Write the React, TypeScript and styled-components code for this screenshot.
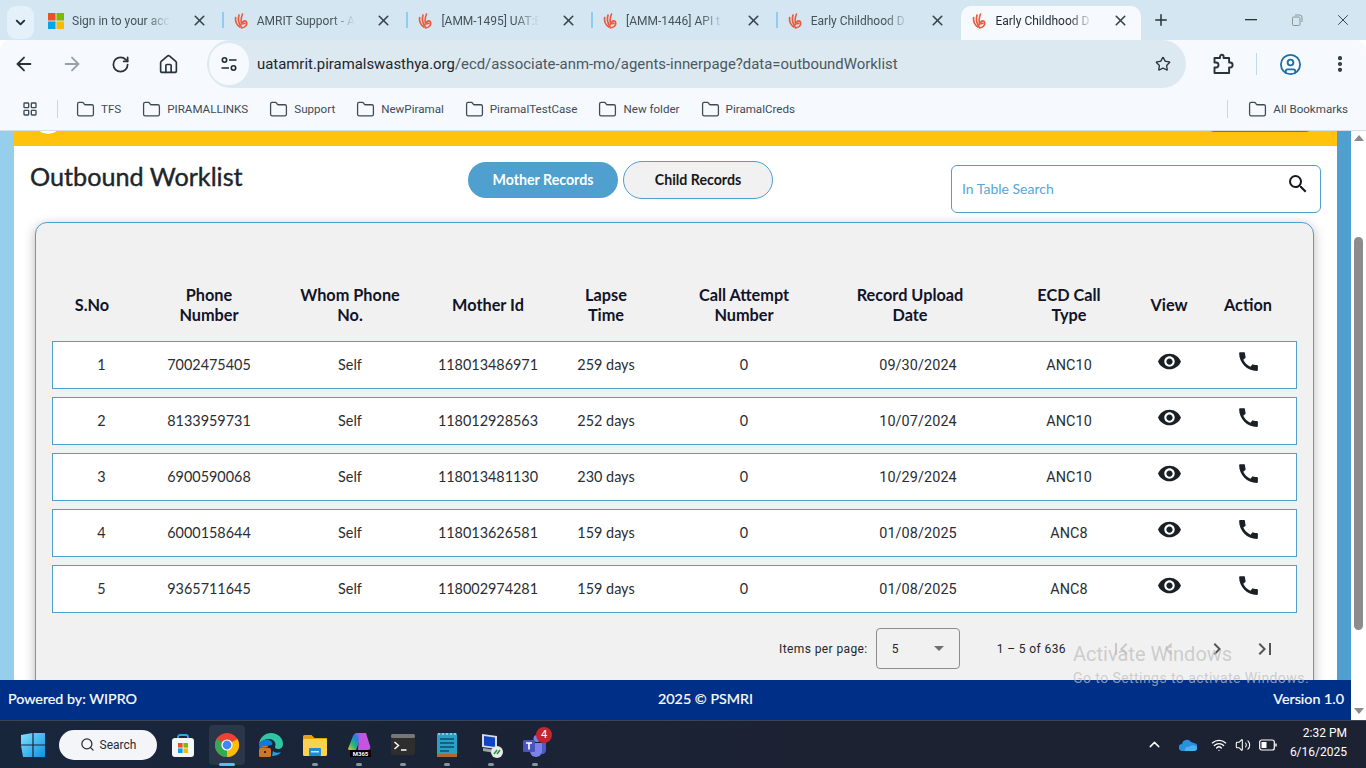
import React from 'react';
import styled, { createGlobalStyle, css } from 'styled-components';
import {
  ArrowLeft,
  ArrowRight,
  ChevronDown,
  ChevronUp,
  CircleUser,
  Folder,
  Home,
  LayoutGrid,
  MoreVertical,
  Plus,
  RotateCw,
  Search as SearchIcon,
  Star,
  Volume2,
  Wifi,
  X,
} from 'lucide-react';
import {
  MdCall,
  MdChevronLeft,
  MdChevronRight,
  MdFirstPage,
  MdLastPage,
  MdSearch,
  MdVisibility,
} from 'react-icons/md';

const GlobalStyle = createGlobalStyle`
  * { box-sizing: border-box; }
  html, body { margin: 0; padding: 0; overflow: hidden; }
  body { font-family: Lato, "Liberation Sans", sans-serif; }
`;

const tabs = [
  { title: 'Sign in to your acc', icon: 'ms' },
  { title: 'AMRIT Support - A', icon: 'amrit', sep: true },
  { title: '[AMM-1495] UAT:E', icon: 'amrit', sep: true },
  { title: '[AMM-1446] API t', icon: 'amrit', sep: true },
  { title: 'Early Childhood D', icon: 'amrit', sep: true },
  { title: 'Early Childhood D', icon: 'amrit', active: true },
];

const bookmarks = ['TFS', 'PIRAMALLINKS', 'Support', 'NewPiramal', 'PiramalTestCase', 'New folder', 'PiramalCreds'];

const records = [
  ['1', '7002475405', 'Self', '118013486971', '259 days', '0', '09/30/2024', 'ANC10'],
  ['2', '8133959731', 'Self', '118012928563', '252 days', '0', '10/07/2024', 'ANC10'],
  ['3', '6900590068', 'Self', '118013481130', '230 days', '0', '10/29/2024', 'ANC10'],
  ['4', '6000158644', 'Self', '118013626581', '159 days', '0', '01/08/2025', 'ANC8'],
  ['5', '9365711645', 'Self', '118002974281', '159 days', '0', '01/08/2025', 'ANC8'],
];

const Screen = styled.div`
  width: 1366px;
  height: 768px;
  display: flex;
  flex-direction: column;
  overflow: hidden;
  position: relative;
`;

/* browser chrome */
const TabStrip = styled.div`
  height: 40px;
  background: #d3e6f2;
  display: flex;
  align-items: flex-end;
  font-family: Roboto, sans-serif;
  font-size: 12px;
  color: #47525b;
`;

const TabMenu = styled.div`
  width: 27px;
  height: 33px;
  margin: 0 4px 1px 7px;
  border-radius: 9px;
  background: #e4f1fa;
  color: #1f2a33;
  display: flex;
  align-items: center;
  justify-content: center;
`;

const Tab = styled.div<{ $sep?: boolean; $active?: boolean }>`
  width: 184.7px;
  height: 34px;
  flex: none;
  padding: 0 15px 5px 10px;
  display: flex;
  align-items: center;
  position: relative;
  ${p => p.$sep && css`
    &::before {
      content: '';
      position: absolute;
      left: -1px;
      top: 6px;
      height: 16px;
      width: 2px;
      background: #8fcdf0;
    }
  `}
  ${p => p.$active && css`
    width: 180px;
    padding-right: 12px;
    background: #f6f9fe;
    border-radius: 10px 10px 0 0;
    color: #1f2a33;
  `}
`;

const TabTitle = styled.span`
  width: 98px;
  margin-left: 8px;
  white-space: nowrap;
  -webkit-mask-image: linear-gradient(to right, #000 76%, transparent 100%);
  mask-image: linear-gradient(to right, #000 76%, transparent 100%);
`;

const TabClose = styled.span`
  margin-left: auto;
  display: flex;
  color: #36424c;
`;

const NewTab = styled.div`
  width: 40px;
  height: 34px;
  display: flex;
  align-items: center;
  justify-content: center;
  padding-bottom: 6px;
  color: #27323b;
`;

const WindowButtons = styled.div`
  margin-left: auto;
  height: 40px;
  display: flex;
  align-items: center;
`;

const WindowButton = styled.div<{ $muted?: boolean }>`
  width: 46px;
  display: flex;
  justify-content: center;
  color: ${p => (p.$muted ? '#8a959c' : '#2b343b')};
`;

const Toolbar = styled.div`
  height: 48px;
  background: #f6f9fe;
  display: flex;
  align-items: center;
  border-radius: 10px 10px 0 0;
  color: #28333c;
`;

const ToolButton = styled.div<{ $muted?: boolean; $w?: number; $ml?: number }>`
  width: ${p => p.$w ?? 48}px;
  height: 48px;
  margin-left: ${p => p.$ml ?? 0}px;
  flex: none;
  display: flex;
  align-items: center;
  justify-content: center;
  color: ${p => (p.$muted ? '#98a1a8' : '#28333c')};
`;

const Omnibox = styled.div`
  width: 979px;
  height: 48px;
  margin-left: 15px;
  padding: 0 5px 0 2px;
  border-radius: 24px;
  background: #dde9f0;
  display: flex;
  align-items: center;
  font-family: Roboto, sans-serif;
  font-size: 14.9px;
  color: #4a5861;
`;

const SiteChip = styled.div`
  width: 40px;
  height: 42px;
  margin-right: 8px;
  border-radius: 21px;
  background: #f6f9fe;
  display: flex;
  align-items: center;
  justify-content: center;
  color: #1f2a33;
`;

const UrlHost = styled.span`
  color: #1c262e;
`;

const OmniStar = styled.span`
  margin-left: auto;
  width: 36px;
  display: flex;
  justify-content: center;
  color: #28333c;
`;

const ToolDivider = styled.div`
  width: 1px;
  height: 22px;
  margin-left: 8px;
  background: #bcdcf0;
  flex: none;
`;

const BookmarkBar = styled.div`
  height: 43px;
  background: #f6f9fe;
  border-bottom: 1px solid #d5dde3;
  display: flex;
  align-items: center;
  padding: 0 18px 0 22px;
  font-family: Roboto, sans-serif;
  font-size: 11.6px;
  color: #3e4b54;
`;

const BookmarkDivider = styled.div<{ $auto?: boolean }>`
  width: 1px;
  height: 18px;
  background: #bcdcf0;
  margin: ${p => (p.$auto ? '0 20px 0 auto' : '0 18px 0 19px')};
`;

const Bookmark = styled.div<{ $last?: boolean }>`
  display: flex;
  align-items: center;
  gap: 6px;
  margin-right: ${p => (p.$last ? 0 : 21)}px;
  white-space: nowrap;
`;

/* page */
const Viewport = styled.div`
  flex: 1;
  min-height: 0;
  display: flex;
`;

const PageColumn = styled.div`
  flex: 1;
  min-width: 0;
  display: flex;
  flex-direction: column;
`;

const PageBody = styled.div`
  flex: 1;
  min-height: 0;
  display: flex;
  overflow: hidden;
`;

const SideStrip = styled.div<{ $color: string }>`
  width: 14px;
  flex: none;
  background: ${p => p.$color};
`;

const Content = styled.div`
  flex: 1;
  min-width: 0;
  background: #fff;
`;

const YellowBar = styled.div`
  height: 15px;
  background: #ffc20e;
  position: relative;
  overflow: hidden;
`;

const LogoEdge = styled.div`
  position: absolute;
  left: 20px;
  top: -24px;
  width: 28px;
  height: 27px;
  border-radius: 50%;
  background: #fff;
`;

const ButtonEdge = styled.div`
  position: absolute;
  right: 22px;
  top: -30px;
  width: 110px;
  height: 31px;
  border-radius: 10px;
  background: #4d7a9c;
`;

const TopRow = styled.div`
  height: 76px;
  padding: 15px 16px 0;
  display: grid;
  grid-template-columns: 438px 483px 370px;
  align-items: start;
`;

const Title = styled.h1`
  margin: 0;
  font-size: 25.2px;
  font-weight: 400;
  line-height: 30px;
  color: #212529;
  -webkit-text-stroke: 0.4px #212529;
`;

const Toggle = styled.div`
  display: flex;
  align-items: center;
  gap: 5px;
  height: 38px;
`;

const ToggleButton = styled.button<{ $active?: boolean }>`
  width: 150px;
  height: ${p => (p.$active ? 36 : 38)}px;
  padding: 0 0 2px;
  border-radius: 20px;
  border: ${p => (p.$active ? 'none' : '1px solid #4f9fcf')};
  background: ${p => (p.$active ? '#4f9fcf' : '#f1f1f1')};
  color: ${p => (p.$active ? '#fff' : '#16181d')};
  font-family: inherit;
  font-size: 14.2px;
  font-weight: 700;
`;

const SearchBox = styled.div`
  height: 48px;
  margin-top: 4px;
  padding: 0 10px 8px;
  border: 1px solid #4f9fcf;
  border-radius: 6px;
  display: flex;
  align-items: center;
  color: #16181d;
  svg { margin-bottom: 2px; }
`;

const SearchInput = styled.input`
  flex: 1;
  border: 0;
  outline: 0;
  padding: 6px 0 0;
  background: transparent;
  font-family: inherit;
  font-size: 14px;
  &::placeholder {
    color: #5ba4d4;
    opacity: 1;
  }
`;

const Panel = styled.section`
  width: 1279px;
  margin-left: 21px;
  padding: 54px 16px 24px;
  border: 1px solid #4f9fcf;
  border-radius: 12px 12px 0 0;
  background: #f1f1f1;
  box-shadow: 0 3px 12px rgba(0, 0, 0, 0.28);
`;

const tableColumns = css`
  display: grid;
  grid-template-columns: 97px 118px 164px 112px 124px 152px 196px 106px 94px 64px 16px;
  align-items: center;
  text-align: center;
`;

const HeadRow = styled.div`
  ${tableColumns}
  height: 56px;
  margin-bottom: 8px;
  padding: 0 1px;
  font-size: 16.3px;
  font-weight: 700;
  line-height: 20px;
  color: #121429;
`;

const HeadCell = styled.div<{ $shift?: number }>`
  padding-right: ${p => p.$shift ?? 0}px;
`;

const Row = styled.div`
  ${tableColumns}
  height: 48px;
  margin-bottom: 8px;
  padding-bottom: 2px;
  border: 1px solid #4f9fcf;
  background: #fff;
  font-size: 14.4px;
  color: #2a2d31;
`;

const Cell = styled.div<{ $alt?: boolean }>`
  ${p => p.$alt && css`
    padding-top: 2px;
    font-family: Roboto, sans-serif;
    letter-spacing: 0.1px;
  `}
`;

const IconCell = styled.div`
  display: flex;
  justify-content: center;
  padding-bottom: 6px;
  color: #1b2027;
`;

const Paginator = styled.div`
  height: 41px;
  margin-top: 15px;
  padding-right: 1px;
  display: flex;
  align-items: center;
  font-family: Roboto, sans-serif;
  font-size: 12px;
  letter-spacing: 0.4px;
  color: #24262a;
`;

const PageLabel = styled.span`
  margin-left: 727px;
`;

const PageSelect = styled.div`
  width: 84px;
  height: 41px;
  margin-left: 8px;
  padding: 0 15px;
  border: 1px solid #8d8d8d;
  border-radius: 4px;
  display: flex;
  align-items: center;
  justify-content: space-between;
`;

const Caret = styled.span`
  width: 0;
  height: 0;
  border-left: 5px solid transparent;
  border-right: 5px solid transparent;
  border-top: 5px solid #6f6f6f;
`;

const RangeLabel = styled.span`
  margin-left: 37px;
  margin-right: 31px;
`;

const PageButton = styled.div<{ $disabled?: boolean }>`
  width: 48px;
  display: flex;
  justify-content: center;
  color: ${p => (p.$disabled ? '#c9c9c9' : '#555')};
`;

const Footer = styled.footer`
  height: 40px;
  flex: none;
  background: #002f87;
  color: #fff;
  padding: 0 7px 4px 8px;
  display: grid;
  grid-template-columns: 650px auto 1fr;
  align-items: center;
  font-size: 14.3px;
  -webkit-text-stroke: 0.2px #fff;
  span:last-child { text-align: right; }
`;

const Scrollbar = styled.div`
  width: 15px;
  flex: none;
  background: #fff;
  display: flex;
  flex-direction: column;
  align-items: center;
  padding-top: 4px;
`;

const ScrollArrow = styled.span<{ $down?: boolean }>`
  width: 0;
  height: 0;
  border-left: 5px solid transparent;
  border-right: 5px solid transparent;
  ${p => (p.$down ? 'border-top: 6px solid #8a8a8a; margin-top: 78px;' : 'border-bottom: 6px solid #8a8a8a;')}
`;

const ScrollThumb = styled.div`
  width: 9px;
  height: 393px;
  margin-top: 96px;
  border-radius: 5px;
  background: #8c8c8c;
`;

const Watermark = styled.div`
  position: absolute;
  left: 1073px;
  top: 641px;
  pointer-events: none;
  font-family: Roboto, sans-serif;
  color: rgba(190, 190, 190, 0.72);
`;

const WatermarkTitle = styled.div`
  font-size: 20px;
  line-height: 26px;
`;

const WatermarkHint = styled.div`
  font-size: 14px;
  line-height: 20px;
  margin-top: 1px;
  letter-spacing: 0.43px;
`;

/* windows taskbar */
const Taskbar = styled.div`
  height: 48px;
  flex: none;
  background: linear-gradient(90deg, #18263c, #1c2232 60%, #1d2233);
  border-top: 1px solid #3a4452;
  display: flex;
  align-items: center;
  padding-left: 21px;
  color: #fff;
  font-family: Roboto, sans-serif;
`;

const SearchPill = styled.div`
  width: 98px;
  height: 30px;
  margin-left: 14px;
  margin-right: 4px;
  border-radius: 15px;
  background: #f3f5f8;
  color: #262b31;
  font-size: 12px;
  display: flex;
  align-items: center;
  justify-content: center;
  gap: 5px;
`;

const TaskIcon = styled.div<{ $active?: boolean; $running?: boolean }>`
  width: 44px;
  height: 40px;
  display: flex;
  align-items: center;
  justify-content: center;
  position: relative;
  ${p => p.$active && css`
    &::before {
      content: '';
      position: absolute;
      left: 4px;
      right: 4px;
      top: 0;
      bottom: 0;
      border-radius: 4px;
      background: rgba(255, 255, 255, 0.08);
    }
  `}
  ${p => (p.$active || p.$running) && css`
    &::after {
      content: '';
      position: absolute;
      bottom: -1px;
      left: 50%;
      transform: translateX(-50%);
      width: ${p.$active ? 16 : 6}px;
      height: 3px;
      border-radius: 2px;
      background: ${p.$active ? '#4fc3f7' : '#8d939c'};
    }
  `}
  svg { position: relative; }
`;

const Badge = styled.span`
  position: absolute;
  right: 5px;
  top: 2px;
  width: 16px;
  height: 16px;
  border-radius: 50%;
  background: #c4262e;
  color: #fff;
  font-size: 11px;
  line-height: 16px;
  text-align: center;
`;

const Tray = styled.div`
  margin-left: auto;
  display: flex;
  align-items: center;
`;

const TrayIcon = styled.div<{ $w: number }>`
  width: ${p => p.$w}px;
  display: flex;
  justify-content: center;
`;

const Clock = styled.div`
  width: 84px;
  padding: 0 19px 3px 0;
  text-align: right;
  font-size: 12px;
  line-height: 19px;
`;

const MsLogo = () => (
  <svg width="16" height="16" viewBox="0 0 16 16">
    <rect width="7.5" height="7.5" fill="#f25022" />
    <rect x="8.5" width="7.5" height="7.5" fill="#7fba00" />
    <rect y="8.5" width="7.5" height="7.5" fill="#00a4ef" />
    <rect x="8.5" y="8.5" width="7.5" height="7.5" fill="#ffb900" />
  </svg>
);

const AmritLogo = () => (
  <svg width="16" height="16" viewBox="0 0 16 16" fill="none" stroke="#ea5a3c" strokeLinecap="round">
    <path d="M7 14C4 12 2 8.500 2.600 4.500" strokeWidth="1.700" />
    <path d="M8 13.500C5.800 10.500 4.800 6 6 2" strokeWidth="1.700" />
    <path d="M8.800 11.500C7.800 8.500 8 4.500 9.500 1" strokeWidth="1.600" />
    <path d="M8.500 14.800c3.300 0 5.600-2.500 5.200-5.100-.4-2-3.200-2.500-3.900-.6-.4 1.400 1 2 2 1.100" strokeWidth="1.700" />
  </svg>
);

const SiteSettingsIcon = () => (
  <svg width="18" height="18" viewBox="0 0 18 18" fill="none" stroke="currentColor" strokeWidth="1.6">
    <circle cx="4.5" cy="5" r="2.2" />
    <path d="M9 5h7.5M1.5 13H9" />
    <circle cx="13.5" cy="13" r="2.2" />
  </svg>
);

const ExtensionIcon = () => (
  <svg width="22" height="22" viewBox="0 0 22 22" fill="none" stroke="currentColor" strokeWidth="1.9" strokeLinejoin="round">
    <path d="M2.500 20V14.500h1.500a2 2 0 0 0 0-5H2.500V5h5.500V3.600a1.800 1.800 0 0 1 3.600 0V5h5.500v4.500h1a2.200 2.200 0 0 1 0 5h-1V20z" />
  </svg>
);

const RestoreIcon = () => (
  <svg width="12" height="12" viewBox="0 0 12 12" fill="none" stroke="currentColor">
    <rect x="1.500" y="3" width="7.500" height="8.500" rx="1.300" />
    <path d="M4 1h4.500A2.500 2.500 0 0 1 11 3.500V8" />
  </svg>
);

const StartIcon = () => (
  <svg width="24" height="24" viewBox="0 0 24 24">
    <defs>
      <linearGradient id="win" x1="0" y1="0" x2="1" y2="1">
        <stop offset="0" stopColor="#7fe3ff" />
        <stop offset="1" stopColor="#0f8fe0" />
      </linearGradient>
    </defs>
    <path fill="url(#win)" d="M0 2l11.400-2v11.400H0zM12.600 0H24v11.400H12.600zM0 12.600h11.400V24H2zM12.600 12.600H24V24H12.600z" />
  </svg>
);

const StoreIcon = () => (
  <svg width="24" height="24" viewBox="0 0 24 24">
    <path d="M7 6V4a2 2 0 0 1 2-2h6a2 2 0 0 1 2 2v2" fill="none" stroke="#2fa6e8" strokeWidth="1.800" />
    <rect x="1" y="5" width="22" height="19" rx="3" fill="#f4f6f8" />
    <rect x="7" y="10" width="4.600" height="4.600" fill="#f25022" />
    <rect x="12.400" y="10" width="4.600" height="4.600" fill="#7fba00" />
    <rect x="7" y="15.400" width="4.600" height="4.600" fill="#00a4ef" />
    <rect x="12.400" y="15.400" width="4.600" height="4.600" fill="#ffb900" />
  </svg>
);

const ChromeIcon = () => (
  <svg width="24" height="24" viewBox="0 0 24 24">
    <circle cx="12" cy="12" r="12" fill="#ea4335" />
    <path d="M12 12L1.600 6A12 12 0 0 0 12 24z" fill="#34a853" />
    <path d="M12 12v12A12 12 0 0 0 22.400 6z" fill="#fbbc04" />
    <circle cx="12" cy="12" r="5.600" fill="#fff" />
    <circle cx="12" cy="12" r="4.400" fill="#4285f4" />
  </svg>
);

const EdgeIcon = () => (
  <svg width="26" height="26" viewBox="0 0 26 26">
    <path d="M1 12C2 5 7 1 13 1c7 0 12 5 12 11 0 3-2 5-5 5-2 0-3-1-3-2 1-2 1-7-5-8-5 0-9 2-11 5z" fill="#2fc6a4" />
    <path d="M1 12c2-3 6-5 10-4 3 1 4 3 3 5-4 0-8 3-7 10-4-2-6-6-6-11z" fill="#1479d8" />
    <path d="M14 24c3 0 7-1 9-4-3 1-6 1-8-1z" fill="#1f9fe0" />
    <rect x="1" y="16" width="12" height="9" rx="1.500" fill="#c9772b" />
    <rect x="5" y="14.500" width="4" height="2" fill="none" stroke="#c9772b" />
    <rect x="6" y="19" width="2" height="2" fill="#3a2a15" />
  </svg>
);

const FilesIcon = () => (
  <svg width="24" height="24" viewBox="0 0 24 24">
    <path d="M0 3.500A1.500 1.500 0 0 1 1.500 2h7l3 3H24v4H0z" fill="#e3a30e" />
    <rect y="6" width="24" height="17" rx="1.500" fill="#ffd24d" />
    <rect x="6" y="15" width="12" height="8" rx="1" fill="#1b8fd2" />
    <rect x="8" y="18" width="8" height="1.500" fill="#bfe6fa" />
  </svg>
);

const M365Icon = () => (
  <svg width="26" height="26" viewBox="0 0 26 26">
    <defs>
      <linearGradient id="m365" x1="0" y1="1" x2="1" y2="0">
        <stop offset="0" stopColor="#f3c623" />
        <stop offset=".35" stopColor="#24b47e" />
        <stop offset=".65" stopColor="#2a7de1" />
        <stop offset="1" stopColor="#d45ad8" />
      </linearGradient>
    </defs>
    <path d="M2 17L7 4c1-2 2-3 4-3h5l-3 9-3 8H4c-2 0-2-1-2-1z" fill="url(#m365)" />
    <path d="M13 4c1-2 2-3 4-3h3l4 13c1 3-1 4-3 4h-9z" fill="#c356e0" />
    <rect x="4" y="18" width="21" height="7" fill="#000" />
    <text x="14.500" y="23.800" textAnchor="middle" fontSize="6" fontWeight="700" fontFamily="Roboto, sans-serif" fill="#fff">M365</text>
  </svg>
);

const TerminalIcon = () => (
  <svg width="24" height="24" viewBox="0 0 24 24">
    <rect y="1" width="24" height="21" rx="2" fill="#2e2e2e" />
    <rect y="1" width="24" height="4" rx="1.500" fill="#777" />
    <path d="M3.500 9l4 3.500-4 3.500" fill="none" stroke="#fff" strokeWidth="1.500" />
    <path d="M10 17h5.500" stroke="#fff" strokeWidth="1.500" />
  </svg>
);

const NotepadIcon = () => (
  <svg width="22" height="26" viewBox="0 0 22 26">
    <rect x="1" y="1" width="20" height="24" rx="1.500" fill="#2ba0c4" />
    <rect x="1" y="22" width="20" height="3" fill="#b5662a" />
    <path d="M4 7h14M4 11h14M4 15h14M4 19h9" stroke="#0c4f68" strokeWidth="1.500" />
    <path d="M3 1v2M7 1v2M11 1v2M15 1v2M19 1v2" stroke="#d9f3fb" />
  </svg>
);

const RemoteIcon = () => (
  <svg width="25" height="26" viewBox="0 0 25 26">
    <path d="M3 2l15 2v13l-15-2z" fill="#d6dce2" />
    <path d="M5 4l11 1.500V15L5 13.500z" fill="#1144c4" />
    <path d="M4 16l13 2-1 3-12-2z" fill="#9aa3ac" />
    <circle cx="18" cy="20" r="6" fill="#e8eaec" />
    <path d="M15 22l3-4M18 22l3-4" stroke="#2d9b3a" strokeWidth="1.600" />
  </svg>
);

const TeamsIcon = () => (
  <svg width="24" height="24" viewBox="0 0 24 24">
    <circle cx="14" cy="5.500" r="3.500" fill="#7b83eb" />
    <circle cx="21" cy="7" r="2.500" fill="#5059c9" />
    <path d="M15 10h8v7c0 3-3 5-5 4z" fill="#5059c9" />
    <path d="M7 10h12v8a6 6 0 0 1-12 0z" fill="#7b83eb" />
    <rect y="7" width="12" height="12" rx="1.500" fill="#4b53bc" />
    <path d="M3 10h6M6 10v6.500" stroke="#fff" strokeWidth="1.600" />
  </svg>
);

const OneDriveIcon = () => (
  <svg width="18" height="12" viewBox="0 0 18 12">
    <path d="M3.500 12A3.500 3.500 0 0 1 3 5a5 5 0 0 1 9-2 4 4 0 0 1 2.500 1A4 4 0 0 1 14.500 12z" fill="#2a8fdc" />
    <path d="M6 12c-1-3 2-5 4-4 2-3 8-2 8 1 0 2-1 3-3 3z" fill="#47b2f0" />
  </svg>
);

const BatteryIcon = () => (
  <svg width="18" height="12" viewBox="0 0 18 12" fill="none" stroke="#fff">
    <rect x=".7" y="1" width="14.600" height="10" rx="2" strokeWidth="1.200" />
    <rect x="2.500" y="3" width="5" height="6" fill="#fff" stroke="none" />
    <path d="M17 4.500v3" strokeWidth="1.400" />
  </svg>
);

const taskIcons = [
  { node: <StoreIcon /> },
  { node: <ChromeIcon />, active: true },
  { node: <EdgeIcon /> },
  { node: <FilesIcon />, running: true },
  { node: <M365Icon />, running: true },
  { node: <TerminalIcon />, running: true },
  { node: <NotepadIcon />, running: true },
  { node: <RemoteIcon />, running: true },
  { node: <TeamsIcon />, running: true, badge: '4' },
];

export default function App() {
  return (
    <Screen>
      <GlobalStyle />
      <TabStrip>
        <TabMenu><ChevronDown size={15} strokeWidth={3} /></TabMenu>
        {tabs.map((t, i) => (
          <Tab key={i} $sep={t.sep} $active={t.active}>
            {t.icon === 'ms' ? <MsLogo /> : <AmritLogo />}
            <TabTitle>{t.title}</TabTitle>
            <TabClose><X size={17} strokeWidth={2.2} /></TabClose>
          </Tab>
        ))}
        <NewTab><Plus size={18} strokeWidth={2} /></NewTab>
        <WindowButtons>
          <WindowButton><svg width="12" height="2"><rect width="12" height="1.300" fill="currentColor" /></svg></WindowButton>
          <WindowButton $muted><RestoreIcon /></WindowButton>
          <WindowButton><X size={18} strokeWidth={1.2} /></WindowButton>
        </WindowButtons>
      </TabStrip>

      <Toolbar>
        <ToolButton><ArrowLeft size={22} strokeWidth={2} /></ToolButton>
        <ToolButton $muted><ArrowRight size={22} strokeWidth={2} /></ToolButton>
        <ToolButton><RotateCw size={19} strokeWidth={2.2} /></ToolButton>
        <ToolButton><Home size={21} strokeWidth={1.9} /></ToolButton>
        <Omnibox>
          <SiteChip><SiteSettingsIcon /></SiteChip>
          <span><UrlHost>uatamrit.piramalswasthya.org</UrlHost>/ecd/associate-anm-mo/agents-innerpage?data=outboundWorklist</span>
          <OmniStar><Star size={16} strokeWidth={2} /></OmniStar>
        </Omnibox>
        <ToolButton $w={50} $ml={12}><ExtensionIcon /></ToolButton>
        <ToolDivider />
        <ToolButton $w={66}><CircleUser size={23} strokeWidth={1.9} color="#1f6f9f" /></ToolButton>
        <ToolButton $w={34}><MoreVertical size={20} strokeWidth={3} /></ToolButton>
      </Toolbar>

      <BookmarkBar>
        <LayoutGrid size={16} strokeWidth={2} />
        <BookmarkDivider />
        {bookmarks.map(b => (
          <Bookmark key={b}><Folder size={19} strokeWidth={1.6} />{b}</Bookmark>
        ))}
        <BookmarkDivider $auto />
        <Bookmark $last><Folder size={19} strokeWidth={1.6} />All Bookmarks</Bookmark>
      </BookmarkBar>

      <Viewport>
        <PageColumn>
          <PageBody>
            <SideStrip $color="#95cfec" />
            <Content>
              <YellowBar>
                <LogoEdge />
                <ButtonEdge />
              </YellowBar>
              <TopRow>
                <Title>Outbound Worklist</Title>
                <Toggle>
                  <ToggleButton $active>Mother Records</ToggleButton>
                  <ToggleButton>Child Records</ToggleButton>
                </Toggle>
                <SearchBox>
                  <SearchInput placeholder="In Table Search" />
                  <MdSearch size={24} />
                </SearchBox>
              </TopRow>
              <Panel>
                <HeadRow>
                  <HeadCell $shift={19}>S.No</HeadCell>
                  <HeadCell>Phone<br />Number</HeadCell>
                  <HeadCell>Whom Phone<br />No.</HeadCell>
                  <HeadCell>Mother Id</HeadCell>
                  <HeadCell>Lapse<br />Time</HeadCell>
                  <HeadCell>Call Attempt<br />Number</HeadCell>
                  <HeadCell $shift={16}>Record Upload<br />Date</HeadCell>
                  <HeadCell>ECD Call<br />Type</HeadCell>
                  <HeadCell>View</HeadCell>
                  <HeadCell>Action</HeadCell>
                </HeadRow>
                {records.map(r => (
                  <Row key={r[0]}>
                    {r.map((v, i) => <Cell key={i} $alt={i >= 6}>{v}</Cell>)}
                    <IconCell><MdVisibility size={25} /></IconCell>
                    <IconCell><MdCall size={25} /></IconCell>
                  </Row>
                ))}
                <Paginator>
                  <PageLabel>Items per page:</PageLabel>
                  <PageSelect>5<Caret /></PageSelect>
                  <RangeLabel>1 – 5 of 636</RangeLabel>
                  <PageButton $disabled><MdFirstPage size={24} /></PageButton>
                  <PageButton $disabled><MdChevronLeft size={24} /></PageButton>
                  <PageButton><MdChevronRight size={24} /></PageButton>
                  <PageButton><MdLastPage size={24} /></PageButton>
                </Paginator>
              </Panel>
            </Content>
            <SideStrip $color="#4f9fcf" />
          </PageBody>
          <Footer>
            <span>Powered by: WIPRO</span>
            <span>2025 © PSMRI</span>
            <span>Version 1.0</span>
          </Footer>
        </PageColumn>
        <Scrollbar>
          <ScrollArrow />
          <ScrollThumb />
          <ScrollArrow $down />
        </Scrollbar>
      </Viewport>

      <Taskbar>
        <StartIcon />
        <SearchPill><SearchIcon size={15} strokeWidth={2} />Search</SearchPill>
        {taskIcons.map((t, i) => (
          <TaskIcon key={i} $active={t.active} $running={t.running}>
            {t.node}
            {t.badge && <Badge>{t.badge}</Badge>}
          </TaskIcon>
        ))}
        <Tray>
          <TrayIcon $w={32}><ChevronUp size={17} strokeWidth={2} /></TrayIcon>
          <TrayIcon $w={36}><OneDriveIcon /></TrayIcon>
          <TrayIcon $w={26}><Wifi size={16} strokeWidth={2} /></TrayIcon>
          <TrayIcon $w={22}><Volume2 size={16} strokeWidth={1.6} /></TrayIcon>
          <TrayIcon $w={28}><BatteryIcon /></TrayIcon>
          <Clock>2:32 PM<br />6/16/2025</Clock>
        </Tray>
      </Taskbar>

      <Watermark>
        <WatermarkTitle>Activate Windows</WatermarkTitle>
        <WatermarkHint>Go to Settings to activate Windows.</WatermarkHint>
      </Watermark>
    </Screen>
  );
}
